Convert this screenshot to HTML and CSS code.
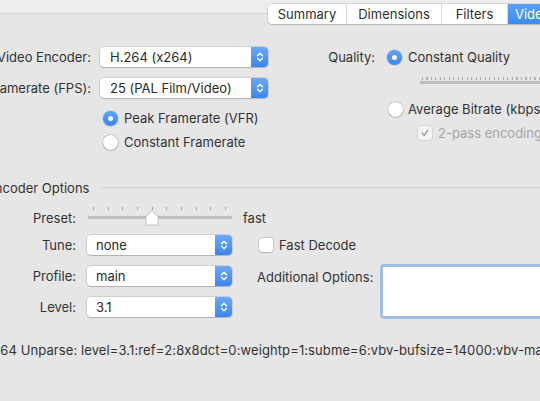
FILE: index.html
```html
<!DOCTYPE html>
<html>
<head>
<meta charset="utf-8">
<link rel="stylesheet" href="styles.css">
</head>
<body>
<div class="window">
  <div class="tabbar">
    <div class="seg">
      <span class="tab t-sum">Summary</span>
      <span class="tab t-dim">Dimensions</span>
      <span class="tab t-fil">Filters</span>
      <span class="tab t-vid on">Video</span>
    </div>
  </div>

  <div class="stage">
    <section class="top">
      <div class="left">
        <div class="form2">
          <span class="lbl">Video Encoder:</span>
          <div class="popup w168"><span class="ptext">H.264 (x264)</span><span class="arrows"><svg width="8" height="12" viewBox="0 0 8 12"><path d="M1.5 4.8 L4 2.3 L6.5 4.8 M1.5 7.2 L4 9.7 L6.5 7.2" fill="none" stroke="#fff" stroke-width="1.4" stroke-linecap="round" stroke-linejoin="round"/></svg></span></div>
          <span class="lbl">Framerate (FPS):</span>
          <div class="popup w168"><span class="ptext">25 (PAL Film/Video)</span><span class="arrows"><svg width="8" height="12" viewBox="0 0 8 12"><path d="M1.5 4.8 L4 2.3 L6.5 4.8 M1.5 7.2 L4 9.7 L6.5 7.2" fill="none" stroke="#fff" stroke-width="1.4" stroke-linecap="round" stroke-linejoin="round"/></svg></span></div>
        </div>
        <div class="radios">
          <div class="rrow"><span class="radio on"></span><span>Peak Framerate (VFR)</span></div>
          <div class="rrow"><span class="radio"></span><span>Constant Framerate</span></div>
        </div>
      </div>
      <div class="right">
        <div class="qrow"><span class="qlbl">Quality:</span><span class="radio on"></span><span>Constant Quality</span></div>
        <div class="qslider"></div>
        <div class="arow"><span class="radio"></span><span>Average Bitrate (kbps)</span></div>
        <div class="crow"><span class="check checked disabled"><svg width="10" height="10" viewBox="0 0 10 10"><path d="M2.2 5.2 L4.2 7.4 L7.8 2.4" fill="none" stroke="#9a9a9a" stroke-width="1.3" stroke-linecap="round" stroke-linejoin="round"/></svg></span><span class="dim">2-pass encoding</span></div>
      </div>
    </section>

    <div class="heading"><span>Encoder Options</span><span class="rule"></span></div>

    <div class="preset-row">
      <span class="lbl l106">Preset:</span>
      <div class="pslider"><svg class="knob" width="14" height="16" viewBox="0 0 14 16"><path d="M1 6.5 L7 1 L13 6.5 V14 a1 1 0 0 1 -1 1 H2 a1 1 0 0 1 -1 -1 Z" fill="#fff" stroke="#b8b8b8" stroke-width="0.8"/></svg></div>
      <span class="fast">fast</span>
    </div>

    <section class="enc">
      <span class="lbl c1 r1">Tune:</span>
      <div class="popup c2 r1"><span class="ptext">none</span><span class="arrows"><svg width="8" height="12" viewBox="0 0 8 12"><path d="M1.5 4.8 L4 2.3 L6.5 4.8 M1.5 7.2 L4 9.7 L6.5 7.2" fill="none" stroke="#fff" stroke-width="1.4" stroke-linecap="round" stroke-linejoin="round"/></svg></span></div>
      <div class="fd c3 r1"><span class="check"></span><span>Fast Decode</span></div>

      <span class="lbl c1 r2">Profile:</span>
      <div class="popup c2 r2"><span class="ptext">main</span><span class="arrows"><svg width="8" height="12" viewBox="0 0 8 12"><path d="M1.5 4.8 L4 2.3 L6.5 4.8 M1.5 7.2 L4 9.7 L6.5 7.2" fill="none" stroke="#fff" stroke-width="1.4" stroke-linecap="round" stroke-linejoin="round"/></svg></span></div>
      <div class="addl c3"><span class="albl">Additional Options:</span><div class="tarea"></div></div>

      <span class="lbl c1 r3">Level:</span>
      <div class="popup c2 r3"><span class="ptext">3.1</span><span class="arrows"><svg width="8" height="12" viewBox="0 0 8 12"><path d="M1.5 4.8 L4 2.3 L6.5 4.8 M1.5 7.2 L4 9.7 L6.5 7.2" fill="none" stroke="#fff" stroke-width="1.4" stroke-linecap="round" stroke-linejoin="round"/></svg></span></div>
    </section>

    <p class="unparse">x264 Unparse: level=3.1:ref=2:8x8dct=0:weightp=1:subme=6:vbv-bufsize=14000:vbv-maxrate=14000:rc-lookahead=10:trellis=0</p>
  </div>
</div>
</body>
</html>
```

FILE: styles.css
```css
* { box-sizing: border-box; }
html, body { margin: 0; padding: 0; }
body {
  width: 540px;
  height: 401px;
  overflow: hidden;
  background: #e6e6e6;
  font-family: "Inter", "Noto Sans", sans-serif;
  font-size: 13px;
  font-feature-settings: "calt" 0;
  color: #333;
}
.window { width: 540px; height: 401px; overflow: hidden; }

.tabbar {
  height: 26px;
  background: linear-gradient(#ededed 0 13px, #d4d4d4 13px 14px, #e6e6e6 14px);
  padding-top: 4px;
  padding-left: 268px;
  white-space: nowrap;
}
.seg {
  display: inline-flex;
  height: 20px;
  background: #fff;
  border-radius: 4px;
  box-shadow: 0 0 0 0.5px rgba(0,0,0,0.18), 0 1px 1px rgba(0,0,0,0.12);
}
.tab {
  display: flex; align-items: center; justify-content: center;
  height: 20px;
  color: #2e2e2e;
  border-right: 1px solid #dcdcdc;
}
.t-sum { width: 79px; }
.t-dim { width: 95px; }
.t-fil { width: 66px; }
.t-vid { width: 60px; border-right: 0; }
.tab.on {
  background: linear-gradient(#5aa1f7, #3d8bf3);
  color: #fff;
  justify-content: flex-start;
  padding-left: 7px;
}

.stage { margin-left: -30px; width: 640px; }

.top { display: flex; margin-top: 21px; }
.left { width: 298px; }
.right { flex: 1; }

.form2 {
  display: grid;
  grid-template-columns: 121px 168px;
  column-gap: 9px;
  row-gap: 11px;
}
.lbl {
  text-align: right;
  line-height: 20px;
  white-space: nowrap;
}
.popup {
  display: flex;
  height: 20px;
  background: #fff;
  border-radius: 4px;
  box-shadow: 0 0 0 0.5px rgba(0,0,0,0.2), 0 1px 1px rgba(0,0,0,0.14);
  overflow: hidden;
}
.ptext { flex: 1; padding-left: 10px; line-height: 20px; color: #2a2a2a; }
.enc .ptext { padding-left: 9px; }
.arrows {
  width: 17px;
  display: flex; align-items: center; justify-content: center;
  background: linear-gradient(#69aaf8, #3a86f0);
}

.radios { margin-left: 133px; margin-top: 8px; }
.rrow { display: flex; align-items: center; height: 24px; gap: 6px; }
.radio {
  width: 15px; height: 15px;
  border-radius: 50%;
  background: #fff;
  box-shadow: 0 0 0 0.5px rgba(0,0,0,0.25), 0 1px 1px rgba(0,0,0,0.12);
  flex: none;
  display: inline-flex; align-items: center; justify-content: center;
}
.radio.on { background: linear-gradient(#5ea3f8, #3a87f1); box-shadow: 0 0 0 0.5px rgba(0,60,160,0.3); }
.radio.on::after {
  content: ""; width: 5px; height: 5px; border-radius: 50%; background: #fff;
}

.qrow { display: flex; align-items: center; height: 20px; }
.qlbl { width: 107px; text-align: right; margin-right: 12px; }
.qrow .radio { margin-right: 6px; }
.qslider {
  margin-left: 152px;
  height: 22px;
  background:
    repeating-linear-gradient(90deg, #b0b0b0 0 1px, transparent 1px 4.5px) 2px 10px / 100% 3px no-repeat,
    linear-gradient(#bdbdbd, #bdbdbd) 0 14px / 100% 3px no-repeat;
  border-radius: 2px;
}
.arow { display: flex; align-items: center; height: 20px; margin-top: 10px; margin-left: 120px; gap: 5px; }
.crow { display: flex; align-items: center; height: 20px; margin-top: 4px; margin-left: 150px; gap: 6px; }
.check {
  width: 14px; height: 14px;
  border-radius: 3px;
  background: #fff;
  box-shadow: 0 0 0 0.5px rgba(0,0,0,0.25), 0 1px 1px rgba(0,0,0,0.1);
  display: inline-flex; align-items: center; justify-content: center;
  flex: none;
}
.check.disabled { background: #f4f4f4; box-shadow: 0 0 0 0.5px rgba(0,0,0,0.15); }
.dim { color: #a5a5a5; }

.heading {
  display: flex; align-items: center;
  margin-top: 26px;
  margin-left: 17px;
  height: 16px;
  white-space: nowrap;
}
.heading .rule {
  flex: 1;
  height: 1px;
  background: #d2d2d2;
  margin-left: 12px;
  margin-top: -1px;
}

.preset-row {
  display: flex; align-items: center;
  margin-top: 11px;
  height: 22px;
}
.l106 { width: 106px; margin-right: 12px; }
.pslider {
  position: relative;
  width: 144px;
  height: 22px;
  background:
    repeating-linear-gradient(90deg, #a9a9a9 0 1px, transparent 1px 14.667px) 5px 0px / 134px 3px no-repeat,
    linear-gradient(#bdbdbd, #bdbdbd) 0 9px / 100% 3px no-repeat;
}
.knob { position: absolute; left: 57px; top: 3px; }
.fast { margin-left: 11px; }

.enc {
  display: grid;
  grid-template-columns: 106px 145px 1fr;
  grid-template-rows: 20px 20px 20px;
  column-gap: 11px;
  row-gap: 11px;
  margin-top: 6px;
}
.c1 { grid-column: 1; }
.c2 { grid-column: 2; }
.c3 { grid-column: 3; }
.r1 { grid-row: 1; }
.r2 { grid-row: 2; }
.r3 { grid-row: 3; }
.fd { display: flex; align-items: center; gap: 6px; padding-left: 16px; }
.addl {
  grid-row: 2 / span 2;
  display: flex;
  align-items: flex-start;
  padding-left: 14px;
}
.albl { line-height: 20px; margin-top: 1px; margin-right: 7px; white-space: nowrap; }
.tarea {
  width: 300px;
  height: 55px;
  margin-top: -2px;
  background: #fff;
  border: 3px solid #9fbee8;
  border-radius: 4px;
}

.unparse {
  margin: 23px 0 0 15px;
  white-space: nowrap;
  line-height: 20px;
  letter-spacing: 0.1px;
}
```
